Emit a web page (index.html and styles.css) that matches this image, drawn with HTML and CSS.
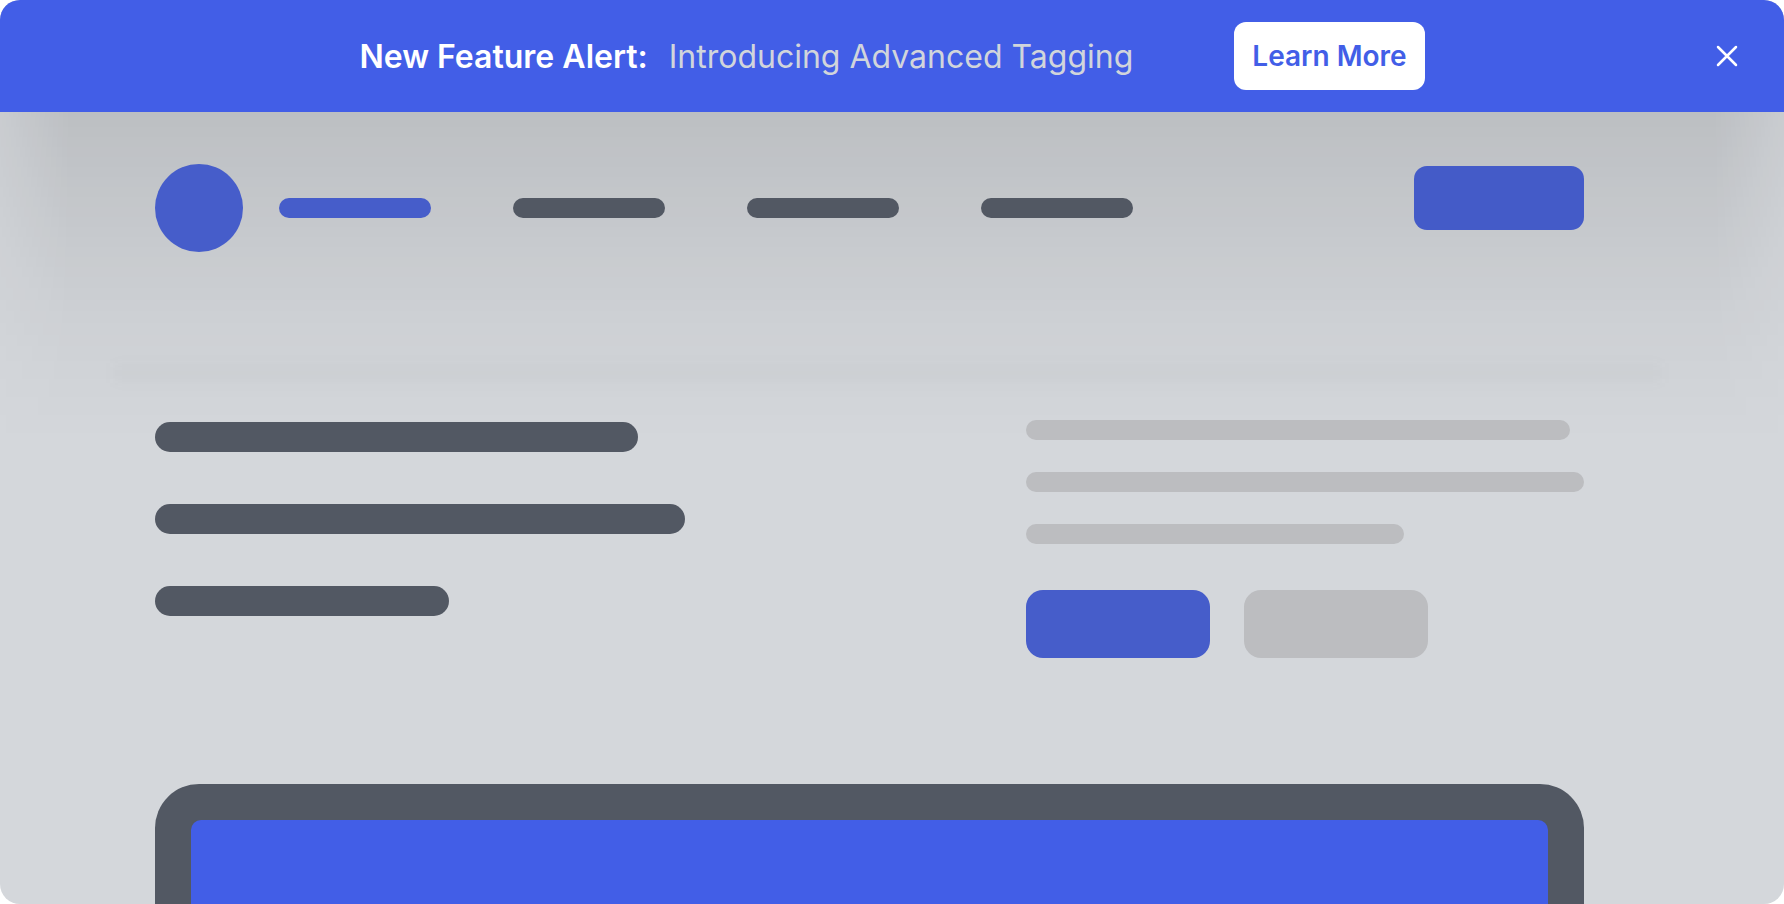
FILE: index.html
```html
<!DOCTYPE html>
<html lang="en">
<head>
  <meta charset="UTF-8">
  <title>New Feature Alert</title>
  <link rel="stylesheet" href="styles.css">
</head>
<body>
  <div class="screen">

    <!-- announcement banner -->
    <div class="banner">
      <div class="banner-msg">
        <p class="banner-text"><strong>New Feature Alert:</strong> <span>Introducing Advanced Tagging</span></p>
        <a class="learn-btn" href="#">Learn More</a>
      </div>
      <button class="close-btn" aria-label="Close">
        <svg width="22" height="22" viewBox="0 0 22 22" fill="none" stroke="currentColor" stroke-width="2.5" stroke-linecap="round">
          <path d="M2 2 L20 20 M20 2 L2 20"/>
        </svg>
      </button>
    </div>

    <!-- wireframe page underneath -->
    <div class="page">
      <div class="nav">
        <div class="logo"></div>
        <div class="nav-links">
          <span class="nav-link active"></span>
          <span class="nav-link"></span>
          <span class="nav-link"></span>
          <span class="nav-link"></span>
        </div>
        <div class="nav-cta"></div>
      </div>

      <div class="ghost"></div>

      <div class="hero">
        <div class="hero-left">
          <div class="heading-bar w1"></div>
          <div class="heading-bar w2"></div>
          <div class="heading-bar w3"></div>
        </div>
        <div class="hero-right">
          <div class="text-line t1"></div>
          <div class="text-line t2"></div>
          <div class="text-line t3"></div>
          <div class="hero-actions">
            <div class="action primary"></div>
            <div class="action secondary"></div>
          </div>
        </div>
      </div>

      <div class="device">
        <div class="device-screen"></div>
      </div>
    </div>

  </div>
</body>
</html>
```

FILE: styles.css
```css
/* base */
body {
  margin: 0;
  background: #ffffff;
  font-family: Inter, "Noto Sans", sans-serif;
}

.screen {
  width: 1784px;
  height: 904px;
  border-radius: 20px;
  overflow: hidden;
  background: #d4d7db;
  display: flex;
  flex-direction: column;
}

/* banner */
.banner {
  flex: none;
  height: 112px;
  background: #425ee7;
  display: grid;
  grid-template-columns: 1fr auto 1fr;
  align-items: center;
  position: relative;
  z-index: 1;
}

/* soft shadow falling on the page below */
.banner::after {
  content: "";
  position: absolute;
  top: 100%;
  left: 0;
  right: 0;
  height: 330px;
  pointer-events: none;
  background: linear-gradient(to bottom,
    rgba(0, 0, 0, 0.11) 0,
    rgba(0, 0, 0, 0.095) 40px,
    rgba(0, 0, 0, 0.07) 100px,
    rgba(0, 0, 0, 0.042) 170px,
    rgba(0, 0, 0, 0.018) 240px,
    rgba(0, 0, 0, 0) 330px);
  -webkit-mask-image: linear-gradient(to right, rgba(0,0,0,0.45), #000 70px, #000 calc(100% - 70px), rgba(0,0,0,0.45));
  mask-image: linear-gradient(to right, rgba(0,0,0,0.45), #000 70px, #000 calc(100% - 70px), rgba(0,0,0,0.45));
}

.banner-msg {
  grid-column: 2;
  display: flex;
  align-items: center;
  gap: 101px;
}

.banner-text {
  margin: 0;
  font-size: 32px;
  color: #d1d5db;
  white-space: nowrap;
}

.banner-text strong {
  color: #ffffff;
  font-weight: 600;
  margin-right: 12px;
}

.learn-btn {
  display: block;
  background: #ffffff;
  color: #425ee7;
  font-size: 28px;
  font-weight: 600;
  text-decoration: none;
  padding: 17px 18px;
  border-radius: 12px;
  line-height: 34px;
}

.close-btn {
  grid-column: 3;
  justify-self: end;
  margin-right: 46px;
  width: 22px;
  height: 22px;
  padding: 0;
  border: 0;
  background: none;
  color: #ffffff;
  display: flex;
}

/* wireframe (sits above the banner shadow so its shapes keep their colour) */
.page {
  position: relative;
  z-index: 2;
  width: 1429px;
  padding-left: 155px;
  padding-top: 52px;
}

.nav {
  display: flex;
  align-items: center;
  height: 88px;
}

.logo {
  width: 88px;
  height: 88px;
  border-radius: 50%;
  background: #465dca;
}

.nav-links {
  display: flex;
  gap: 82px;
  margin-left: 36px;
}

.nav-link {
  width: 152px;
  height: 20px;
  border-radius: 10px;
  background: #525863;
}

.nav-link.active {
  background: #465dca;
}

.nav-cta {
  margin-left: auto;
  align-self: flex-start;
  margin-top: 2px;
  width: 170px;
  height: 64px;
  border-radius: 13px;
  background: #445bc8;
}

/* blurred line of text far behind */
.ghost {
  margin: 111px 0 0 -41px;
  width: 1547px;
  height: 20px;
  background: rgba(90, 95, 105, 0.025);
  filter: blur(6px);
}

.hero {
  display: flex;
  justify-content: space-between;
  margin-top: 37px;
}

.hero-left {
  display: flex;
  flex-direction: column;
  gap: 52px;
  padding-top: 2px;
}

.heading-bar {
  height: 30px;
  border-radius: 15px;
  background: #525863;
}

.heading-bar.w1 { width: 483px; }
.heading-bar.w2 { width: 530px; }
.heading-bar.w3 { width: 294px; }

.hero-right {
  width: 558px;
  display: flex;
  flex-direction: column;
  gap: 32px;
}

.text-line {
  height: 20px;
  border-radius: 10px;
  background: #bcbdc0;
}

.text-line.t1 { width: 544px; }
.text-line.t2 { width: 558px; }
.text-line.t3 { width: 378px; }

.hero-actions {
  display: flex;
  gap: 34px;
  margin-top: 14px;
}

.action {
  width: 184px;
  height: 68px;
  border-radius: 17px;
}

.action.primary { background: #465dca; }
.action.secondary { background: #bcbdc0; }

.device {
  margin-top: 126px;
  height: 300px;
  border: 36px solid #525863;
  border-bottom: 0;
  border-radius: 44px 44px 0 0;
  background: #525863;
}

.device-screen {
  height: 100%;
  border-radius: 10px 10px 0 0;
  background: #425ee7;
}
```
